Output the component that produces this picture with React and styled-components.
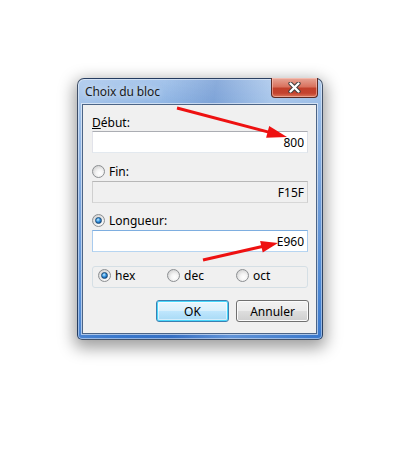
import React from 'react'
import styled, { createGlobalStyle, css } from 'styled-components'

const GlobalStyle = createGlobalStyle`
  html, body {
    margin: 0;
    padding: 0;
    background: #ffffff;
  }
  body {
    font-family: 'Noto Sans', 'Liberation Sans', sans-serif;
    font-size: 12px;
    color: #000;
  }
`

const arrows = [
  { from: [100, 30], to: [210, 59], head: 20 },
  { from: [126, 182], to: [201, 165], head: 17 }
]

function arrowShape({ from, to, head }) {
  const dx = to[0] - from[0]
  const dy = to[1] - from[1]
  const len = Math.hypot(dx, dy)
  const ux = dx / len
  const uy = dy / len
  const bx = to[0] - ux * head
  const by = to[1] - uy * head
  const w = 6
  const pts = [
    [to[0], to[1]],
    [bx - uy * w, by + ux * w],
    [bx + uy * w, by - ux * w]
  ]
  return {
    line: { x1: from[0], y1: from[1], x2: bx + ux * 2, y2: by + uy * 2 },
    points: pts.map(p => p.join(',')).join(' ')
  }
}

const Radio = ({ checked, children }) => (
  <RadioLabel>
    <RadioDot $checked={checked} />
    <span>{children}</span>
  </RadioLabel>
)

export default function App() {
  return (
    <Page>
      <GlobalStyle />
      <Window>
        <TitleBar>
          <Title>Choix du bloc</Title>
          <CloseButton>
            <svg width='13' height='11' viewBox='0 0 13 11'>
              <path d='M2.5 1.5 L10.5 9.5 M10.5 1.5 L2.5 9.5' stroke='#3b3b3b' strokeWidth='4.2' strokeLinecap='round' />
              <path d='M2.5 1.5 L10.5 9.5 M10.5 1.5 L2.5 9.5' stroke='#ffffff' strokeWidth='2.4' strokeLinecap='round' />
            </svg>
          </CloseButton>
        </TitleBar>
        <Client>
          <FieldLabel>
            <u>D</u>ébut:
          </FieldLabel>
          <TextBox readOnly value='800' />
          <OptionRow $top={11}>
            <Radio>Fin:</Radio>
          </OptionRow>
          <TextBox readOnly $disabled value='F15F' />
          <OptionRow $top={10}>
            <Radio checked>Longueur:</Radio>
          </OptionRow>
          <TextBox readOnly $focused value='E960' />
          <GroupBox>
            <BaseItem>
              <Radio checked>hex</Radio>
            </BaseItem>
            <BaseItem>
              <Radio>dec</Radio>
            </BaseItem>
            <BaseItem>
              <Radio>oct</Radio>
            </BaseItem>
          </GroupBox>
          <ButtonRow>
            <PushButton $primary>OK</PushButton>
            <PushButton>Annuler</PushButton>
          </ButtonRow>
        </Client>
        <Overlay width='246' height='262' viewBox='0 0 246 262'>
          {arrows.map((a, i) => {
            const s = arrowShape(a)
            return (
              <g key={i}>
                <line {...s.line} stroke='#ee1111' strokeWidth='3' />
                <polygon points={s.points} fill='#ee1111' />
              </g>
            )
          })}
        </Overlay>
      </Window>
    </Page>
  )
}

/**
 * styled components
 */

const Page = styled.div`
  width: 400px;
  height: 458px;
  padding: 78px 0 0 77px;
  box-sizing: border-box;
`

const Window = styled.div`
  position: relative;
  width: 246px;
  height: 262px;
  box-sizing: border-box;
  border: 1px solid rgba(30, 40, 60, 0.75);
  border-radius: 7px 7px 5px 5px;
  padding: 0 5px 5px 4px;
  display: flex;
  flex-direction: column;
  background:
    linear-gradient(100deg, rgba(255,255,255,0.18) 0%, rgba(255,255,255,0) 30%, rgba(40,80,160,0.2) 48%, rgba(255,255,255,0.2) 68%, rgba(255,255,255,0) 100%),
    linear-gradient(180deg, #a6c5eb 0%, #8cb3e3 12%, #6797d7 45%, #4784d2 80%, #3877cc 100%);
  box-shadow:
    inset 0 0 0 1px rgba(255, 255, 255, 0.45),
    0 5px 16px 3px rgba(0, 0, 0, 0.38);
`

const TitleBar = styled.div`
  height: 26px;
  display: flex;
  justify-content: space-between;
  align-items: center;
  padding-left: 3px;
`

const Title = styled.div`
  font-size: 12px;
  color: #1a1a1a;
  text-shadow: 0 0 6px rgba(255, 255, 255, 0.9);
  letter-spacing: -0.1px;
`

const CloseButton = styled.div`
  align-self: flex-start;
  margin-top: -1px;
  margin-right: -1px;
  width: 47px;
  height: 20px;
  box-sizing: border-box;
  border: 1px solid #5a2a24;
  border-top: none;
  border-radius: 0 0 4px 4px;
  display: flex;
  align-items: center;
  justify-content: center;
  background: linear-gradient(180deg, #e7a697 0%, #d9735f 45%, #c2402b 55%, #c4432f 80%, #d9775b 100%);
  box-shadow: inset 0 0 0 1px rgba(255, 210, 200, 0.5);
`

const Client = styled.div`
  flex: 1;
  background: #f0f0f0;
  border: 1px solid #4b6486;
  box-shadow: 0 0 0 1px rgba(255, 255, 255, 0.55);
  padding: 10px 8px 11px 9px;
  display: flex;
  flex-direction: column;
`

const FieldLabel = styled.div`
  height: 15px;
  line-height: 15px;
  margin-bottom: 1px;
`

const OptionRow = styled.div`
  height: 15px;
  margin-top: ${p => p.$top}px;
  margin-bottom: 2px;
  display: flex;
  align-items: center;
`

const TextBox = styled.input`
  height: 22px;
  width: 100%;
  box-sizing: border-box;
  margin: 0;
  padding: 0 3px 0 4px;
  text-align: right;
  font-family: inherit;
  font-size: 12px;
  color: #000;
  outline: none;
  background: #ffffff;
  border: 1px solid;
  border-color: #abadb3 #dbdfe6 #e3e9ef #e2e3ea;
  ${p =>
    p.$disabled &&
    css`
      background: #f0f0f0;
      border-color: #b7b7b7 #cfcfcf #d7d7d7 #cfcfcf;
    `}
  ${p =>
    p.$focused &&
    css`
      border-color: #7eaee0 #a9cbee #b7d5f1 #a9cbee;
    `}
`

const RadioLabel = styled.label`
  display: inline-flex;
  align-items: center;
  gap: 4px;
  height: 15px;
  line-height: 15px;
`

const RadioDot = styled.span`
  position: relative;
  width: 13px;
  height: 13px;
  box-sizing: border-box;
  border-radius: 50%;
  border: 1px solid #8c8f92;
  background: radial-gradient(circle at 60% 65%, #ffffff 0%, #f4f4f4 35%, #d6d6d6 75%, #c4c4c4 100%);
  ${p =>
    p.$checked &&
    css`
      &::after {
        content: '';
        position: absolute;
        left: 2px;
        top: 2px;
        width: 7px;
        height: 7px;
        box-sizing: border-box;
        border-radius: 50%;
        border: 1px solid #1c4a74;
        background: radial-gradient(circle at 40% 35%, #d6eefe 0%, #4aa6ea 35%, #1566b6 70%, #0d3f76 100%);
      }
    `}
`

const GroupBox = styled.div`
  margin-top: 14px;
  height: 22px;
  box-sizing: border-box;
  border: 1px solid #d5dfe5;
  border-radius: 3px;
  display: flex;
  align-items: center;
  padding-left: 5px;
`

const BaseItem = styled.div`
  width: 69px;
`

const ButtonRow = styled.div`
  margin-top: 12px;
  display: flex;
  justify-content: flex-end;
  gap: 7px;
  margin-right: -1px;
`

const PushButton = styled.div`
  width: 73px;
  height: 22px;
  box-sizing: border-box;
  border-radius: 3px;
  display: flex;
  align-items: center;
  justify-content: center;
  font-size: 12px;
  color: #000;
  border: 1px solid #707070;
  background: linear-gradient(180deg, #f2f2f2 0%, #ebebeb 48%, #dddddd 52%, #cfcfcf 100%);
  box-shadow: inset 0 0 0 1px #fbfbfb;
  ${p =>
    p.$primary &&
    css`
      border-color: #3c7fb1;
      background: linear-gradient(180deg, #eaf6fd 0%, #d9f0fc 48%, #bee6fd 52%, #a7d9f5 100%);
      box-shadow: inset 0 0 0 1px #48d7fb, inset 0 0 0 2px rgba(255, 255, 255, 0.5);
    `}
`

const Overlay = styled.svg`
  position: absolute;
  left: -1px;
  top: -1px;
  pointer-events: none;
  overflow: visible;
`
